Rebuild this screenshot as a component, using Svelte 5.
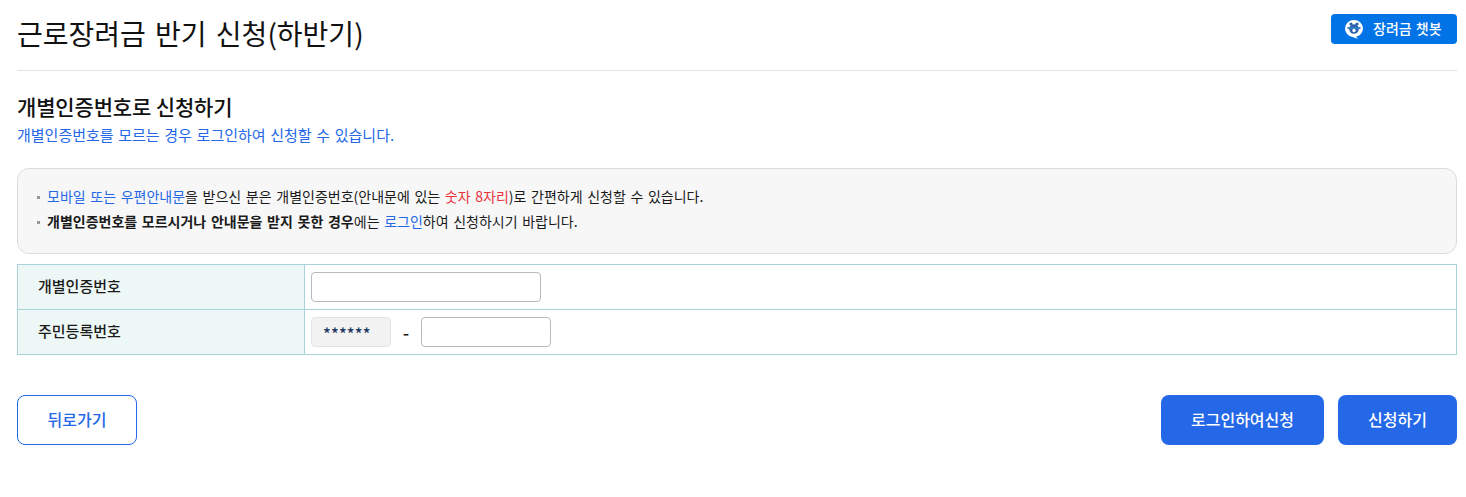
<script>
  let serial = $state("");
  let back = $state("");
</script>

<div class="page">
  <header class="top">
    <h1>근로장려금 반기 신청(하반기)</h1>
    <button class="chatbot">
      <svg width="22" height="22" viewBox="0 0 22 22">
        <path d="M11 2a9 8.500 0 0 1 9 8.500 9 8.500 0 0 1-7 8.300L15 21l-5.500-2.100A9 8.500 0 0 1 2 10.500 9 8.500 0 0 1 11 2z" fill="#fff"/>
        <circle cx="8" cy="6" r="1.600" fill="#2a62b0"/>
        <circle cx="14" cy="6" r="1.600" fill="#2a62b0"/>
        <circle cx="11" cy="11" r="4.800" fill="#2a62b0"/>
        <path d="M4.500 9h13v2h-13z" fill="#2f7fc4"/>
        <circle cx="11" cy="12.500" r="1.700" fill="#fff"/>
      </svg>
      <span>장려금 챗봇</span>
    </button>
  </header>

  <section class="intro">
    <h2>개별인증번호로 신청하기</h2>
    <p>개별인증번호를 모르는 경우 로그인하여 신청할 수 있습니다.</p>
  </section>

  <div class="notice">
    <p><span class="blue">모바일 또는 우편안내문</span>을 받으신 분은 개별인증번호(안내문에 있는 <span class="red">숫자 8자리</span>)로 간편하게 신청할 수 있습니다.</p>
    <p><strong>개별인증번호를 모르시거나 안내문을 받지 못한 경우</strong>에는 <span class="blue">로그인</span>하여 신청하시기 바랍니다.</p>
  </div>

  <div class="form">
    <div class="label">개별인증번호</div>
    <div class="cell"><input class="serial" bind:value={serial} /></div>
    <div class="label last">주민등록번호</div>
    <div class="cell last">
      <div class="masked">******</div>
      <span class="dash">-</span>
      <input class="back" bind:value={back} />
    </div>
  </div>

  <footer class="actions">
    <button class="btn outline">뒤로가기</button>
    <div class="right">
      <button class="btn solid wide">로그인하여신청</button>
      <button class="btn solid">신청하기</button>
    </div>
  </footer>
</div>

<style>
  :global(body) {
    margin: 0;
    background: #fff;
  }
  .page {
    box-sizing: border-box;
    width: 1466px;
    height: 497px;
    padding: 0 9px 0 17px;
    font-family: "Noto Sans CJK KR", "Noto Sans", sans-serif;
    color: #1a1a1a;
    overflow: hidden;
  }
  .top {
    display: flex;
    justify-content: space-between;
    align-items: flex-start;
    height: 70px;
    border-bottom: 1px solid #e3e3e3;
  }
  h1 {
    margin: 13px 0 0;
    font-size: 28px;
    line-height: 40px;
    font-weight: 400;
    word-spacing: 3px;
    color: #111;
  }
  .chatbot {
    display: flex;
    align-items: center;
    gap: 8px;
    width: 126px;
    height: 30px;
    margin-top: 14px;
    padding: 0 0 2px 12px;
    border: 0;
    border-radius: 4px;
    background: #0073e6;
    color: #fff;
    font: 500 14px/20px "Noto Sans CJK KR", sans-serif;
    word-spacing: 1px;
  }
  .chatbot svg {
    margin-top: 2px;
  }
  .intro {
    margin-top: 21px;
  }
  h2 {
    margin: 0 0 2px;
    font-size: 21px;
    line-height: 28px;
    font-weight: 500;
    letter-spacing: -0.15px;
    color: #111;
  }
  .intro p {
    margin: 0;
    font-size: 15px;
    line-height: 26px;
    color: #2468e8;
    word-spacing: 1.3px;
  }
  .notice {
    box-sizing: border-box;
    height: 86px;
    margin-top: 20px;
    padding: 15px 19px;
    background: #f7f7f7;
    border: 1px solid #dcdcdc;
    border-radius: 12px;
    font-size: 14px;
    word-spacing: 1.5px;
  }
  .notice p {
    position: relative;
    margin: 0;
    padding-left: 10px;
    line-height: 25px;
  }
  .notice p::before {
    content: "";
    position: absolute;
    left: 0;
    top: 12px;
    width: 3px;
    height: 3px;
    background: #999;
  }
  .notice strong {
    font-weight: 700;
  }
  .blue {
    color: #2468e8;
  }
  .red {
    color: #e8323c;
  }
  .form {
    display: grid;
    grid-template-columns: 287px 1fr;
    margin-top: 10px;
    border: 1px solid #a9d3da;
    border-bottom: 0;
  }
  .label {
    box-sizing: border-box;
    height: 45px;
    padding: 0 0 3px 20px;
    display: flex;
    align-items: center;
    background: #edf7f5;
    border-right: 1px solid #a9d3da;
    border-bottom: 1px solid #a9d3da;
    font-size: 15px;
    font-weight: 500;
  }
  .cell {
    box-sizing: border-box;
    height: 45px;
    padding-left: 6px;
    display: flex;
    align-items: center;
    border-bottom: 1px solid #a9d3da;
  }
  input {
    box-sizing: border-box;
    height: 30px;
    border: 1px solid #b9b9b9;
    border-radius: 4px;
    background: #fff;
    outline: 0;
  }
  .serial {
    width: 230px;
  }
  .masked {
    box-sizing: border-box;
    width: 80px;
    height: 30px;
    padding-left: 11px;
    line-height: 30px;
    background: #f2f2f2;
    border: 1px solid #e4e4e4;
    border-radius: 4px;
    font-size: 16px;
    font-weight: 500;
    color: #1e3a66;
    letter-spacing: 0.2px;
  }
  .dash {
    width: 30px;
    text-align: center;
    font-size: 18px;
    font-weight: 500;
  }
  .back {
    width: 130px;
  }
  .actions {
    display: flex;
    justify-content: space-between;
    margin-top: 40px;
  }
  .right {
    display: flex;
    gap: 14px;
  }
  .btn {
    box-sizing: border-box;
    width: 120px;
    height: 50px;
    padding: 0 0 3px;
    border-radius: 8px;
    font: 500 16px/24px "Noto Sans CJK KR", sans-serif;
  }
  .outline {
    background: #fff;
    border: 1px solid #2468e8;
    color: #2468e8;
  }
  .solid {
    background: #2468e8;
    border: 0;
    color: #fff;
    width: 119px;
  }
  .wide {
    width: 163px;
  }
</style>
